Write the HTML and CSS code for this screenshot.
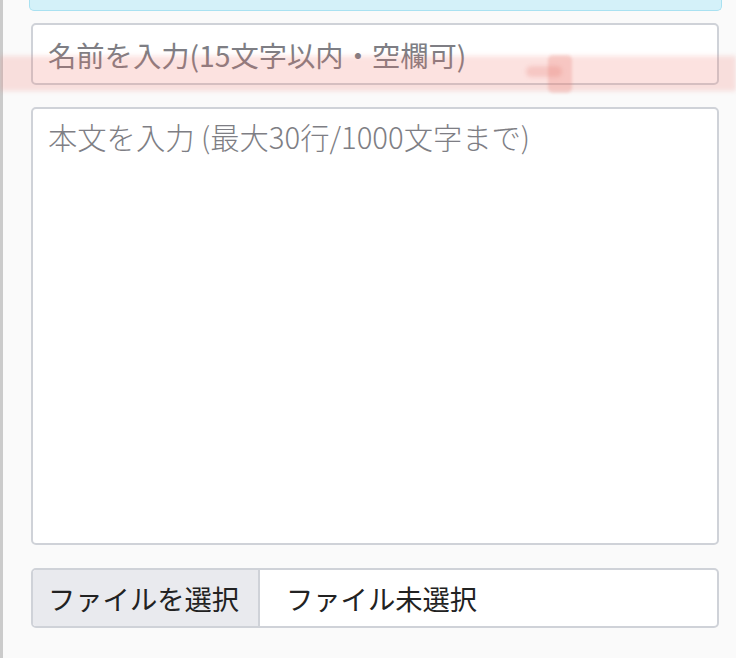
FILE: index.html
```html
<!DOCTYPE html>
<html lang="ja">
<head>
<meta charset="utf-8">
<title>投稿フォーム</title>
<link rel="stylesheet" href="styles.css">
</head>
<body>
<div class="page">
  <main class="form">
    <div class="notice"></div>
    <input class="field name" type="text" placeholder="名前を入力(15文字以内・空欄可)">
    <textarea class="field body" placeholder="本文を入力 (最大30行/1000文字まで)"></textarea>
    <div class="file">
      <span class="file-btn">ファイルを選択</span>
      <span class="file-name">ファイル未選択</span>
    </div>
  </main>
  <div class="highlight">
    <div class="band"></div>
    <div class="mark-h"></div>
    <div class="mark-v"></div>
  </div>
</div>
</body>
</html>
```

FILE: styles.css
```css
* { box-sizing: border-box; }
html, body {
  margin: 0;
  padding: 0;
  height: 100%;
  background: #fafafa;
  overflow: hidden;
}
body {
  font-family: "Noto Sans CJK JP", "Noto Sans", sans-serif;
}
.page {
  position: relative;
  height: 658px;
  border-left: 3px solid #cbcbcb;
}
.form {
  display: flex;
  flex-direction: column;
  padding-left: 28px;
  width: 716px;
}
.notice {
  height: 11px;
  margin-left: -2px;
  margin-right: -3px;
  background: #d4f1f9;
  border: 1px solid #a9e1f1;
  border-top: none;
  border-radius: 0 0 5px 5px;
}
.field {
  display: block;
  width: 688px;
  border: 2px solid #cfd2d8;
  border-radius: 5px;
  background: #fff;
  font-family: "Noto Sans CJK JP", "Noto Sans", sans-serif;
  color: #222;
  outline: none;
  margin: 0;
}
.field::placeholder { color: #7e7e84; }
.name {
  margin-top: 12px;
  height: 62px;
  padding: 0 15px;
  font-size: 28.3px;
}
.body {
  margin-top: 22px;
  height: 438px;
  padding: 6px 15px;
  line-height: 42px;
  font-size: 29.3px;
  font-weight: 300;
  resize: none;
}
.file {
  margin-top: 23px;
  width: 688px;
  height: 60px;
  display: flex;
  align-items: stretch;
  border: 2px solid #cfd2d8;
  border-radius: 5px;
  background: #fff;
  overflow: hidden;
  font-size: 27.3px;
  color: #222;
}
.file-btn {
  display: flex;
  align-items: center;
  width: 227px;
  padding-left: 15px;
  background: #e9eaee;
  border-right: 2px solid #cfd2d8;
}
.file-name {
  display: flex;
  align-items: center;
  padding-left: 26px;
}
.highlight {
  position: absolute;
  left: -3px;
  top: 0;
  width: 736px;
  height: 110px;
  pointer-events: none;
}
.band {
  position: absolute;
  left: 0;
  top: 56px;
  width: 736px;
  height: 35px;
  background: rgba(238, 110, 100, 0.2);
  filter: blur(2.5px);
}
.mark-h {
  position: absolute;
  left: 526px;
  top: 66px;
  width: 36px;
  height: 11px;
  border-radius: 6px;
  background: rgba(232, 120, 110, 0.25);
  filter: blur(2px);
}
.mark-v {
  position: absolute;
  left: 548px;
  top: 55px;
  width: 24px;
  height: 38px;
  border-radius: 5px;
  background: rgba(232, 120, 110, 0.26);
  filter: blur(1.5px);
}
```
